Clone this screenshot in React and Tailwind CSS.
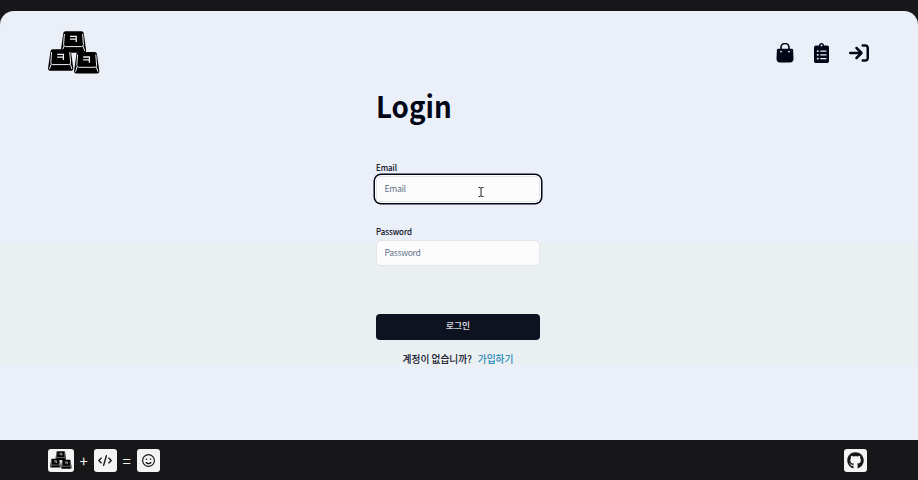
import { FaArrowRightToBracket, FaCode, FaRegFaceSmile, FaGithub } from "react-icons/fa6";
import { FaClipboardList } from "react-icons/fa";

function Keycap({ x, y }) {
  return (
    <g transform={`translate(${x} ${y})`}>
      <path d="M5 0.3H21Q22.8 0.3 23.2 2.1L25.6 19Q25.8 21.7 23.4 21.7H2.6Q0.2 21.7 0.4 19L2.8 2.1Q3.2 0.3 5 0.3Z" fill="#000" />
      <path d="M3.9 3L3.1 13.5Q3 15.6 5 15.6H21Q23 15.6 22.9 13.5L22.1 3M3.3 15.4L1.8 20M22.7 15.4L24.2 20" fill="none" stroke="#eef2f8" strokeWidth="1" />
      <path d="M9.5 5.3H15.7V11M9.5 8.2H15.5" fill="none" stroke="#eef2f8" strokeWidth="1.3" />
    </g>
  );
}

function Logo({ className }) {
  return (
    <svg viewBox="0 0 52 43" className={className} aria-hidden="true">
      <Keycap x={12.5} y={0} />
      <Keycap x={-0.3} y={18} />
      <Keycap x={25.7} y={20.7} />
    </svg>
  );
}

function BagIcon({ className }) {
  return (
    <svg viewBox="0 0 18 20" className={className} aria-hidden="true">
      <path d="M2.2 5.8H15.8Q17 5.8 17.1 7L17.5 15.5Q17.5 19.5 14 19.5H4Q0.5 19.5 0.5 15.5L0.9 7Q1 5.8 2.2 5.8Z" fill="currentColor" />
      <path d="M5 7V4.5A4 4 0 0 1 13 4.5V7" fill="none" stroke="currentColor" strokeWidth="1.6" />
      <circle cx="5" cy="8.6" r="0.9" fill="#ebeff7" />
      <circle cx="13" cy="8.6" r="0.9" fill="#ebeff7" />
    </svg>
  );
}

function Field({ label, type, focused }) {
  return (
    <label className="block text-[8.6px] leading-[12px] text-[#020617]">
      <span className="block origin-left scale-x-[0.93] [-webkit-text-stroke:0.15px_#020617]">{label}</span>
      <input
        type={type}
        placeholder={label}
        className={
          "mt-[3px] block h-[26px] w-full rounded-[5px] border border-[#e2e5eb] bg-[#fcfcfd] px-[7.5px] pb-[2px] text-[8.6px] tracking-[-0.32px] outline-none placeholder:text-[#64748b] " +
          (focused ? "ring-[1.5px] ring-[#020617] ring-offset-1 ring-offset-white" : "")
        }
      />
    </label>
  );
}

export default function App() {
  return (
    <div className="flex h-[480px] w-[918px] flex-col overflow-hidden bg-[#171719] pt-[11px] font-['Noto_Sans_CJK_KR',sans-serif] text-[#020617]">
      <div className="flex h-[429px] shrink-0 flex-col rounded-t-[14px] bg-[linear-gradient(to_bottom,#ebeff7_232px,#eaeff2_232px,#eaeff2_354px,#ebeff8_354px)]">
        <header className="flex h-[82px] shrink-0 items-center justify-between pr-[49px] pl-[48px]">
          <Logo className="h-[43px] w-[52px]" />
          <nav className="flex items-center gap-[20px] pt-[2px]">
            <BagIcon className="h-5 w-[18px]" />
            <FaClipboardList className="h-5 w-[15px]" />
            <FaArrowRightToBracket className="size-5" />
          </nav>
        </header>
        <main className="mr-auto ml-[376px] w-[164px]">
          <h1 className="h-[68px] origin-left scale-x-[0.925] text-[30px] leading-[25px] font-bold">Login</h1>
          <form>
            <Field label="Email" type="email" focused />
            <div className="h-[23px]" />
            <Field label="Password" type="password" />
            <button type="button" className="mt-[48px] block h-[26px] w-full rounded-[4px] bg-[#0f1221] pb-[2px] text-[8.7px] text-[#f1f5f9] [-webkit-text-stroke:0.15px_#f1f5f9]">
              로그인
            </button>
          </form>
          <p className="mt-[12px] flex justify-center gap-[6px] text-[9.7px] leading-[15px] whitespace-nowrap">
            <span className="[-webkit-text-stroke:0.15px_#020617]">계정이 없습니까?</span>
            <a className="text-[#1684b5] [-webkit-text-stroke:0.15px_#1684b5]">가입하기</a>
          </p>
        </main>
      </div>
      <footer className="flex h-[40px] shrink-0 items-center justify-between pr-[51px] pl-[48px]">
        <div className="flex items-center text-[#f4f4f5]">
          <span className="flex h-[23px] w-[26px] items-center justify-center rounded-[3px] bg-[#f4f4f5]">
            <Logo className="h-[18px] w-[22px]" />
          </span>
          <span className="w-[19.5px] text-center text-[15px] leading-none">+</span>
          <span className="flex h-[23px] w-[23.5px] items-center justify-center rounded-[3px] bg-[#f4f4f5] text-[#18181b]">
            <FaCode className="h-[11px] w-[14px]" />
          </span>
          <span className="w-[19.5px] text-center text-[15px] leading-none">=</span>
          <span className="flex h-[23px] w-[23.5px] items-center justify-center rounded-[3px] bg-[#f4f4f5] text-[#18181b]">
            <FaRegFaceSmile className="size-[13px]" />
          </span>
        </div>
        <a className="flex size-[23px] items-center justify-center rounded-[3px] bg-[#f4f4f5] text-[#18181b]">
          <FaGithub className="size-[17px]" />
        </a>
      </footer>
      <svg className="pointer-events-none absolute top-[187px] left-[477px] h-[10px] w-[8px]" viewBox="0 0 8 10" fill="none" stroke="#252830" strokeWidth="1">
        <path d="M1.5 0.5H3L4 1.3L5 0.5H6.5M4 1.3V8.7M1.5 9.5H3L4 8.7L5 9.5H6.5" />
      </svg>
    </div>
  );
}
